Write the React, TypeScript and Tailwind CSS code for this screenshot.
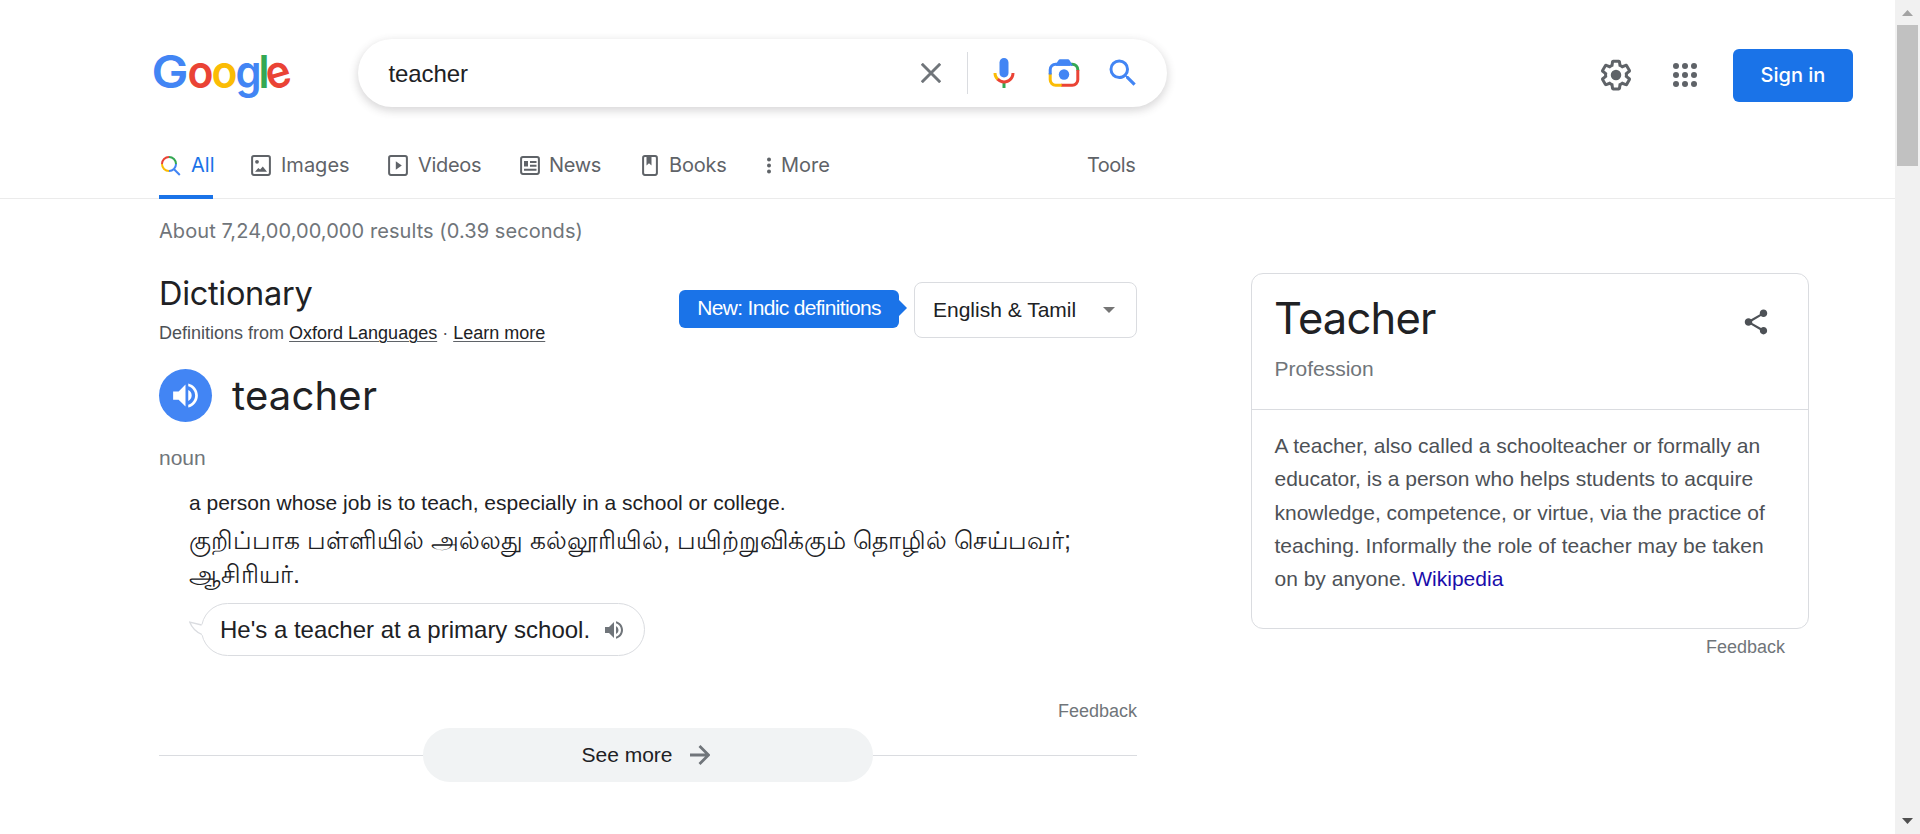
import type { ReactNode } from "react";

function GoogleLogo() {
  return (
    <svg className="ml-[143px] h-[68px] w-[158px] shrink-0 overflow-visible font-[Inter] font-semibold" viewBox="-10 -5 158 68">
      <g fontSize="45">
        <text x="-1.500" y="43.500" fill="#4285f4" textLength="37" lengthAdjust="spacingAndGlyphs">G</text>
        <text x="34.500" y="43.500" fill="#ea4335" textLength="26" lengthAdjust="spacingAndGlyphs">o</text>
        <text x="58.500" y="43.500" fill="#fbbc05" textLength="26" lengthAdjust="spacingAndGlyphs">o</text>
        <text x="82.500" y="43.500" fill="#4285f4" textLength="26" lengthAdjust="spacingAndGlyphs">g</text>
        <text x="105.500" y="43.500" fill="#34a853" textLength="11" lengthAdjust="spacingAndGlyphs">l</text>
        <text x="113" y="43.500" fill="#ea4335" textLength="25" lengthAdjust="spacingAndGlyphs" transform="rotate(-16 125.500 31.500)">e</text>
      </g>
    </svg>
  );
}

function MicIcon() {
  return (
    <svg className="size-9" viewBox="0 0 24 24">
      <path fill="#4285f4" d="M12 15c1.66 0 3-1.31 3-2.97V5.01C15 3.35 13.66 2 12 2S9 3.34 9 5.01v7.02C9 13.69 10.34 15 12 15z" />
      <path fill="#34a853" d="M11 18.08h2V22h-2z" />
      <path fill="#fbbc05" d="M7.05 16.87C5.78 15.54 5 14.04 5 12h2c0 1.45.56 2.42 1.47 3.38v.32l-1.15 1.18z" />
      <path fill="#ea4335" d="M12 16.93a4.97 5.25 0 0 1-3.54-1.55l-1.41 1.49C8.31 18.21 10.07 19 12 19c3.87 0 6.99-2.92 6.99-7H17c0 2.92-2.24 4.93-5 4.93z" />
    </svg>
  );
}

function LensIcon() {
  return (
    <svg className="size-9" viewBox="0 0 36 36" fill="none" strokeWidth="3">
      <path stroke="#34a853" d="M25 9.200h1.300a5.500 5.500 0 0 1 5.500 5.500v1" />
      <path stroke="#ea4335" d="M31.800 15v9.700a5.500 5.500 0 0 1-5.500 5.500H15" />
      <path stroke="#fbbc05" d="M4.200 18v6.700a5.500 5.500 0 0 0 5.500 5.500h6" />
      <path stroke="#4285f4" d="M4.200 19.500v-4.800a5.500 5.500 0 0 1 5.500-5.500H24" />
      <path fill="#4285f4" d="M10 9l2.600-4q.5-.7 1.300-.7h8.200q.8 0 1.300.7L27 10.700H10z" />
      <circle cx="18" cy="19.500" r="5.200" fill="#4285f4" />
    </svg>
  );
}

function SearchIcon() {
  return (
    <svg className="size-9" viewBox="0 0 24 24" fill="#4285f4">
      <path d="M15.500 14h-.79l-.28-.27A6.471 6.471 0 0 0 16 9.500 6.500 6.500 0 1 0 9.500 16c1.610 0 3.090-.59 4.230-1.570l.27.28v.79l5 4.990L20.490 19l-4.990-5zm-6 0C7.010 14 5 11.990 5 9.500S7.010 5 9.500 5 14 7.010 14 9.500 11.990 14 9.500 14z" />
    </svg>
  );
}

function GearIcon() {
  return (
    <svg className="size-9" viewBox="0 0 24 24" fill="#5f6368">
      <path d="M13.85 22.25h-3.7c-.74 0-1.36-.54-1.45-1.27l-.27-1.89c-.27-.14-.53-.29-.79-.46l-1.8.72c-.7.26-1.47-.03-1.81-.65L2.2 15.53c-.35-.66-.2-1.44.36-1.88l1.53-1.19c-.01-.15-.02-.3-.02-.46 0-.15.01-.31.02-.46l-1.52-1.19c-.59-.45-.74-1.26-.37-1.88l1.85-3.19c.34-.62 1.11-.9 1.79-.63l1.81.73c.26-.17.52-.32.78-.46l.27-1.91c.09-.7.71-1.25 1.44-1.25h3.7c.74 0 1.36.54 1.45 1.27l.27 1.89c.27.14.53.29.79.46l1.8-.72c.71-.26 1.48.03 1.82.65l1.84 3.18c.36.66.2 1.44-.36 1.88l-1.52 1.19c.01.15.02.3.02.46s-.01.31-.02.46l1.52 1.19c.56.45.72 1.23.37 1.86l-1.86 3.22c-.34.62-1.11.9-1.8.63l-1.8-.72c-.26.17-.52.32-.78.46l-.27 1.91c-.1.68-.72 1.22-1.46 1.22zm-3.23-2h2.76l.37-2.55.53-.22c.44-.18.88-.44 1.34-.78l.45-.34 2.38.96 1.38-2.4-2.03-1.58.07-.56c.03-.26.06-.51.06-.78s-.03-.53-.06-.78l-.07-.56 2.03-1.58-1.39-2.4-2.39.96-.45-.35c-.42-.32-.87-.58-1.33-.77l-.52-.22-.37-2.55h-2.76l-.37 2.55-.53.21c-.44.19-.88.44-1.34.79l-.45.33-2.38-.95-1.39 2.39 2.03 1.58-.07.56a7 7 0 0 0-.06.79c0 .26.02.53.06.78l.07.56-2.03 1.58 1.38 2.4 2.39-.96.45.35c.43.33.86.58 1.33.77l.53.22.38 2.55z" />
      <circle cx="12" cy="12" r="3.500" />
    </svg>
  );
}

function AppsIcon() {
  return (
    <svg className="size-9" viewBox="0 0 24 24" fill="#5f6368">
      {[6, 12, 18].map((y) => [6, 12, 18].map((x) => <circle key={`${x}-${y}`} cx={x} cy={y} r="2" />))}
    </svg>
  );
}

function VolumeIcon({ className }: { className: string }) {
  return (
    <svg className={className} viewBox="0 0 24 24" fill="currentColor">
      <path d="M3 9v6h4l5 5V4L7 9H3zm13.500 3A4.500 4.500 0 0 0 14 7.970v8.050c1.480-.73 2.500-2.250 2.500-4.020zM14 3.230v2.060c2.890.86 5 3.540 5 6.710s-2.110 5.850-5 6.710v2.060c4.010-.91 7-4.490 7-8.770s-2.990-7.860-7-8.770z" />
    </svg>
  );
}

const tabIcon = "size-[21px] shrink-0";

function AllIcon() {
  return (
    <svg className="size-[22px] shrink-0" viewBox="0 0 22 22" fill="none" strokeWidth="2">
      <path stroke="#ea4335" d="M3 9a7 7 0 0 1 7-7" />
      <path stroke="#34a853" d="M10 2a7 7 0 0 1 7 7" />
      <path stroke="#fbbc05" d="M3 9a7 7 0 0 0 7 7" />
      <path stroke="#4285f4" d="M17 9a7 7 0 0 1-7 7M14.800 14l6 6" />
    </svg>
  );
}

function ImagesIcon() {
  return (
    <svg className={tabIcon} viewBox="0 0 21 21" fill="none">
      <rect x="1.100" y="1.100" width="17.800" height="18.800" rx="1.800" stroke="#5f6368" strokeWidth="2" />
      <circle cx="6" cy="6.800" r="1.900" fill="#5f6368" />
      <path d="M4 16.800l3.300-3.900 1.800 1.700 2.700-3.200 4.200 5.400z" fill="#5f6368" />
    </svg>
  );
}

function VideosIcon() {
  return (
    <svg className={tabIcon} viewBox="0 0 21 21" fill="none">
      <rect x="1.100" y="1.100" width="17.800" height="18.800" rx="1.800" stroke="#5f6368" strokeWidth="2" />
      <path d="M7.800 6.300v8.400l6-4.200z" fill="#5f6368" />
    </svg>
  );
}

function NewsIcon() {
  return (
    <svg className={tabIcon} viewBox="0 0 21 21" fill="none">
      <rect x="1.100" y="2.100" width="17.800" height="16.800" rx="1.800" stroke="#5f6368" strokeWidth="2" />
      <path d="M4 6h4v5.500H4zM10 6h6.500v2H10zM10 9.700h6.500v2H10zM4 13.700h12.500v2H4z" fill="#5f6368" />
    </svg>
  );
}

function BooksIcon() {
  return (
    <svg className="h-[21px] w-4 shrink-0" viewBox="0 0 16 21" fill="none">
      <rect x="1.100" y="1.100" width="13.800" height="18.800" rx="1.800" stroke="#5f6368" strokeWidth="2" />
      <path d="M4.500 1.500h5v9l-2.500-2.300-2.500 2.300z" fill="#5f6368" />
    </svg>
  );
}

function MoreIcon() {
  return (
    <svg className="h-[21px] w-[6px] shrink-0" viewBox="0 0 6 21" fill="#5f6368">
      <circle cx="3" cy="4.500" r="2" />
      <circle cx="3" cy="10.500" r="2" />
      <circle cx="3" cy="16.500" r="2" />
    </svg>
  );
}

function Tab({ icon, label, className, active }: { icon?: ReactNode; label: string; className: string; active?: boolean }) {
  return (
    <a
      className={`flex h-[67px] shrink-0 items-center border-b-4 pt-1 whitespace-nowrap ${
        active ? "border-[#1a73e8] text-[#1a73e8]" : "border-transparent text-[#5f6368]"
      } ${className}`}
    >
      {icon}
      <span className="pb-[2px]">{label}</span>
    </a>
  );
}

function Header() {
  return (
    <header className="flex h-[107px] items-end">
      <div className="flex h-[68px] w-full items-center">
        <GoogleLogo />
        <div className="ml-[57px] flex h-[68px] w-[809px] items-center rounded-full bg-white pl-[30.500px] shadow-[0_3px_8px_1px_rgba(64,60,67,0.2)]">
          <span className="w-[532.500px] pt-px text-[24px] leading-8 tracking-[-0.1px] text-[#202124]">teacher</span>
          <svg className="size-[20px]" viewBox="0 0 20 20" stroke="#70757a" strokeWidth="2.900">
            <path d="M.8.8l18.400 18.400M19.200.8L.8 19.200" />
          </svg>
          <span className="ml-[26px] h-[42px] w-px bg-[#dadce0]" />
          <div className="ml-[18px] flex gap-6">
            <MicIcon />
            <LensIcon />
          </div>
          <div className="ml-[23px]">
            <SearchIcon />
          </div>
        </div>
        <div className="ml-[431px] flex items-center pt-1">
          <GearIcon />
          <div className="ml-[33px]">
            <AppsIcon />
          </div>
          <button className="ml-[30px] h-[53px] w-[120px] rounded-md bg-[#1a73e8] pb-px font-[Inter] text-[20px] font-medium text-white">
            Sign in
          </button>
        </div>
      </div>
    </header>
  );
}

function Tabs() {
  return (
    <nav className="flex h-[92px] items-end pl-[159px] font-[Inter] text-[20px] shadow-[inset_0_-1px_0_#ebebeb]">
      <Tab active icon={<AllIcon />} label="All" className="w-[54px] gap-[10px]" />
      <Tab icon={<ImagesIcon />} label="Images" className="ml-[38px] w-[98px] gap-[9px]" />
      <Tab icon={<VideosIcon />} label="Videos" className="ml-[39px] w-[93px] gap-[9px] tracking-[-0.3px]" />
      <Tab icon={<NewsIcon />} label="News" className="ml-[39px] w-[81px] gap-[8px] tracking-[-0.3px]" />
      <Tab icon={<BooksIcon />} label="Books" className="ml-[41px] w-[85px] gap-[11px] tracking-[-0.2px]" />
      <Tab icon={<MoreIcon />} label="More" className="ml-[39px] w-[64px] gap-[9px]" />
      <Tab label="Tools" className="ml-[257px] tracking-[-0.5px]" />
    </nav>
  );
}

function Dictionary() {
  return (
    <main className="w-[978px] text-[#202124]">
      <div className="mt-[18px] h-[28px] font-[Inter] text-[20px] leading-[28px] tracking-[0.07px] text-[#70757a]">
        About 7,24,00,00,000 results (0.39 seconds)
      </div>

      <div className="mt-[29px] flex h-[79px] justify-between">
        <div>
          <h2 className="h-[40px] font-[Inter] text-[32.5px] leading-[40px] tracking-[-0.3px]">Dictionary</h2>
          <p className="mt-[7px] text-[18px] leading-[24px] text-[#4d5156]">
            Definitions from{" "}
            <a className="text-[#202124] underline decoration-[#5f6368] decoration-1 underline-offset-2">Oxford Languages</a> ·{" "}
            <a className="text-[#202124] underline decoration-[#5f6368] decoration-1 underline-offset-2">Learn more</a>
          </p>
        </div>
        <div className="flex pt-[8px]">
          <div className="mt-[8px] h-[38px] w-[220px] rounded-md bg-[#1a73e8] text-center text-[21px] leading-[35px] tracking-[-0.68px] text-white">
            New: Indic definitions
          </div>
          <svg className="mt-[18px] h-4 w-2" viewBox="0 0 8 16" fill="#1a73e8">
            <path d="M0 0l8 8-8 8z" />
          </svg>
          <div className="ml-[7px] flex h-[56px] w-[223px] items-center justify-between rounded-lg border border-[#dadce0] pr-[21px] pl-[18px] text-[21px]">
            English &amp; Tamil
            <svg className="h-[6px] w-3" viewBox="0 0 12 6" fill="#757575">
              <path d="M0 0h12L6 6z" />
            </svg>
          </div>
        </div>
      </div>

      <div className="mt-[16px] flex h-[53px] items-center">
        <button className="flex size-[53px] items-center justify-center rounded-full bg-[#4285f4] text-white">
          <VolumeIcon className="size-[33px]" />
        </button>
        <span className="ml-[20px] font-[Inter] text-[40px] leading-[48px] tracking-[0.2px]">teacher</span>
      </div>

      <div className="mt-[22px] text-[21px] leading-[28px] text-[#70757a]">noun</div>

      <div className="mt-[17px] ml-[30px]">
        <p className="text-[21px] leading-[28px]">a person whose job is to teach, especially in a school or college.</p>
        <p className="mt-[7px] h-[68px] text-[25.200px] leading-[33.500px] whitespace-nowrap">
          குறிப்பாக பள்ளியில் அல்லது கல்லூரியில், பயிற்றுவிக்கும் தொழில் செய்பவர்;
          <br />
          ஆசிரியர்.
        </p>
        <div className="mt-[11px] flex">
          <svg className="relative z-10 mt-[17px] -mr-[3px] h-[18px] w-[15px] shrink-0" viewBox="0 0 15 18">
            <path d="M15 3.800L12.500 5 .8 2.200Q4 10.500 12.500 14.500L15 16z" fill="#fff" />
            <path d="M12.600 5L.8 2.200Q4 10.500 12.900 14.500" fill="none" stroke="#dadce0" strokeWidth="1.300" />
          </svg>
          <div className="flex h-[53px] w-[444px] items-center rounded-full border border-[#dadce0] pl-[18px]">
            <span className="text-[24px] leading-[32px]">He's a teacher at a primary school.</span>
            <VolumeIcon className="ml-[12px] size-6 text-[#70757a]" />
          </div>
        </div>
      </div>

      <div className="mt-[43px] text-right text-[18px] leading-[24px] text-[#70757a]">Feedback</div>
      <div className="mt-[5px] flex h-[54px] items-center">
        <span className="h-px flex-1 bg-[#dadce0]" />
        <button className="flex h-[54px] w-[450px] items-center rounded-full bg-[#f1f3f4] pl-[158.500px] text-[21px]">
          See more
          <svg className="ml-[17px] size-[20px]" viewBox="0 0 20 20" fill="none" stroke="#70757a" strokeWidth="2.800">
            <path d="M0 10h18M9.500 1l9 9-9 9" />
          </svg>
        </button>
        <span className="h-px flex-1 bg-[#dadce0]" />
      </div>
    </main>
  );
}

function KnowledgePanel() {
  return (
    <aside className="mt-[74px] ml-[114px] w-[558px]">
      <div className="h-[356px] rounded-xl border border-[#dadce0]">
        <div className="flex h-[136px] justify-between border-b border-[#dadce0] pr-[37px] pl-[23px]">
          <div>
            <h1 className="mt-[16px] -ml-px font-[Inter] text-[43.5px] leading-[56px] tracking-[-0.800px] text-[#202124]">Teacher</h1>
            <p className="mt-[9px] -ml-[0.500px] text-[21px] leading-[28px] text-[#70757a]">Profession</p>
          </div>
          <svg className="mt-[33px] size-[30px]" viewBox="0 0 24 24" fill="#4d5156">
            <path d="M18 16.080c-.76 0-1.440.3-1.960.77L8.910 12.700c.05-.23.09-.46.09-.7s-.04-.47-.09-.7l7.050-4.110c.54.5 1.250.81 2.040.81 1.660 0 3-1.340 3-3s-1.340-3-3-3-3 1.340-3 3c0 .24.04.47.09.7L8.040 9.810C7.500 9.310 6.790 9 6 9c-1.660 0-3 1.340-3 3s1.340 3 3 3c.79 0 1.500-.31 2.040-.81l7.120 4.160c-.05.21-.08.43-.08.65 0 1.610 1.310 2.920 2.920 2.920s2.920-1.310 2.920-2.920-1.310-2.920-2.920-2.920z" />
          </svg>
        </div>
        <p className="mt-[19px] pl-[22.500px] text-[21px] leading-[33.250px] whitespace-nowrap text-[#4d5156]">
          A teacher, also called a schoolteacher or formally an
          <br />
          educator, is a person who helps students to acquire
          <br />
          knowledge, competence, or virtue, via the practice of
          <br />
          teaching. Informally the role of teacher may be taken
          <br />
          on by anyone. <a className="text-[#1a0dab]">Wikipedia</a>
        </p>
      </div>
      <div className="mt-[6px] pr-[24px] text-right text-[18px] leading-[24px] text-[#70757a]">Feedback</div>
    </aside>
  );
}

function Scrollbar() {
  return (
    <div className="flex h-[834px] w-[25px] flex-col items-center bg-[#f1f1f1]">
      <svg className="mt-[10px] h-[6px] w-[11px]" viewBox="0 0 11 6" fill="#a3a3a3">
        <path d="M0 6h11L5.500 0z" />
      </svg>
      <div className="mt-[9px] h-[141px] w-[21px] bg-[#c1c1c1]" />
      <svg className="mt-auto mb-[10px] h-[6px] w-[11px]" viewBox="0 0 11 6" fill="#505050">
        <path d="M0 0h11L5.500 6z" />
      </svg>
    </div>
  );
}

export default function App() {
  return (
    <div className="flex h-[834px] w-[1920px] overflow-hidden bg-white font-['Liberation_Sans',sans-serif]">
      <div className="w-[1895px]">
        <Header />
        <Tabs />
        <div className="flex items-start pl-[159px]">
          <Dictionary />
          <KnowledgePanel />
        </div>
      </div>
      <Scrollbar />
    </div>
  );
}
